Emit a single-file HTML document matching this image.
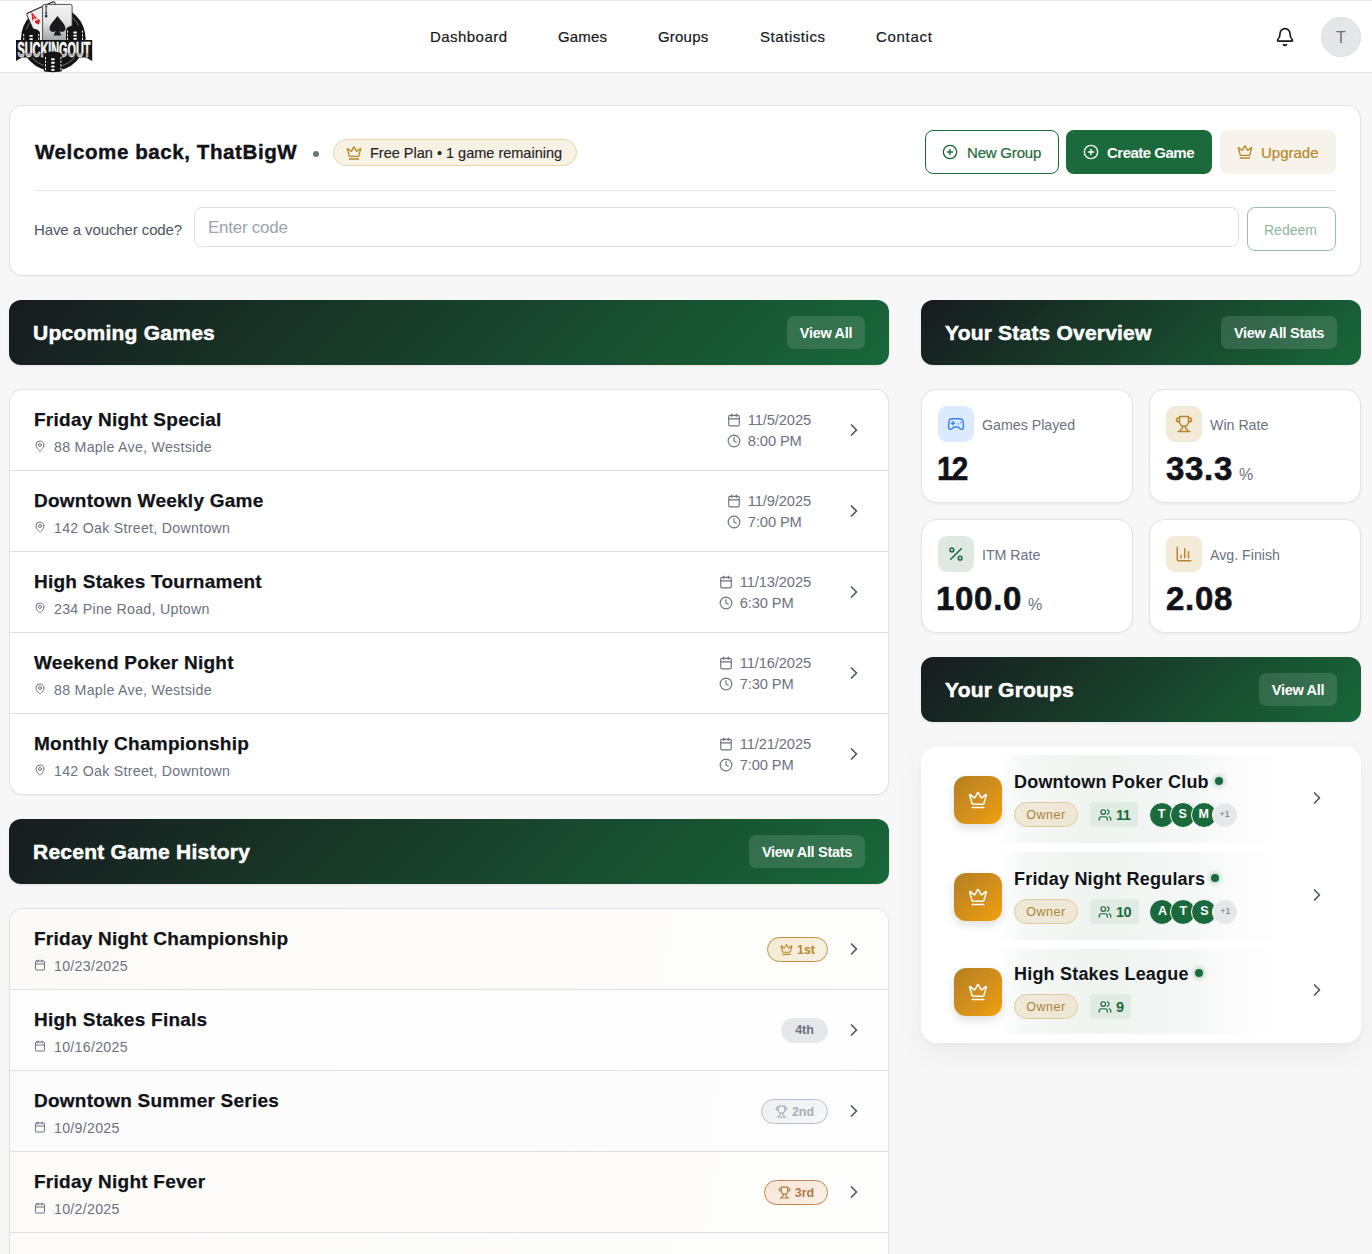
<!DOCTYPE html>
<html><head><meta charset="utf-8">
<style>
*{box-sizing:border-box;margin:0;padding:0}
html,body{width:1372px;height:1254px;overflow:hidden}
body{background:#f7f7f7;font-family:"Liberation Sans",sans-serif;color:#111318;position:relative}
.abs{position:absolute}
.hdr{position:absolute;left:0;top:0;width:1372px;height:73px;background:#fff;border-top:1px solid #e4e5e9;border-bottom:1px solid #e4e5e9}
.nav{position:absolute;top:27px;font-size:15px;color:#16181d;white-space:nowrap;line-height:20px;-webkit-text-stroke:.2px #16181d}
.card{position:absolute;background:#fff;border:1px solid #e0e1e6;border-radius:13px;box-shadow:0 1px 2px rgba(0,0,0,.04)}
.sechdr{position:absolute;height:65px;border-radius:12px;background:linear-gradient(135deg,#171b1f 0%,#183d29 45%,#18673a 100%);box-shadow:0 1px 3px rgba(0,0,0,.08)}
.sechdr h2{position:absolute;left:24px;top:21px;font-size:21px;font-weight:700;color:#fff;line-height:24px;white-space:nowrap;-webkit-text-stroke:.5px #fff}
.vbtn{position:absolute;top:16px;height:33px;border-radius:7px;background:rgba(255,255,255,.13);color:#fff;font-size:14.5px;font-weight:700;line-height:34.5px;text-align:center;white-space:nowrap;letter-spacing:-.3px}
.row{position:absolute;left:0;width:878px;height:80px}
.div{position:absolute;left:0;width:878px;height:1px;background:#dfe0e5}
.rt{position:absolute;left:24px;top:19px;font-size:19px;font-weight:700;color:#111318;white-space:nowrap;line-height:22px;letter-spacing:.25px;-webkit-text-stroke:.25px #111318}
.rs{position:absolute;left:24px;top:48px;font-size:14.2px;color:#6b7280;white-space:nowrap;line-height:18px;letter-spacing:.28px}
.rs svg{position:absolute;left:0;top:2px}
.rs span{position:absolute;left:20px;top:0}
.chev{position:absolute;left:834px;top:30px}
.dt{position:absolute;font-size:14.7px;color:#6b7280;white-space:nowrap;line-height:18px}
.stat{position:absolute;width:212px;height:114px;background:#fff;border:1px solid #e2e3e8;border-radius:15px;box-shadow:0 1px 3px rgba(0,0,0,.05)}
.sico{position:absolute;left:16px;top:16px;width:36px;height:36px;border-radius:9px}
.sico svg{position:absolute;left:9px;top:9px}
.slab{position:absolute;left:60px;top:26px;font-size:14.2px;color:#6b7280;line-height:18px;white-space:nowrap}
.sval{position:absolute;left:16px;top:59px;font-size:33px;font-weight:700;color:#111318;line-height:40px;white-space:nowrap;letter-spacing:.7px;-webkit-text-stroke:.6px #111318}
.sval small{font-size:16px;font-weight:400;color:#6b7280;letter-spacing:0;margin-left:6px;-webkit-text-stroke:0}
.dtb{position:absolute;right:77px;top:19.5px}
.dl{position:relative;padding-left:21px;font-size:14.7px;color:#6b7280;line-height:21px;white-space:nowrap;height:21px;letter-spacing:-.12px}
.dl svg{position:absolute;left:0;top:3px}
.bdg{position:absolute;top:28px;height:25px;border-radius:13px;font-size:12.5px;font-weight:700;line-height:24.5px;text-align:center;white-space:nowrap}
.bdg svg{position:relative;top:2px;margin-right:4px}
.grow{position:absolute;left:16px;width:408px}
.ghl{position:absolute;left:62px;top:0;width:282px;height:100%;background:linear-gradient(90deg,rgba(238,243,240,0) 0%,rgba(238,243,239,.55) 8%,rgba(236,242,238,.85) 35%,rgba(238,242,239,.6) 65%,rgba(255,255,255,0) 100%)}
.gico{position:absolute;left:17px;top:22px;width:48px;height:48px;border-radius:12px;background:linear-gradient(135deg,#b47f22 0%,#d18e1b 50%,#f0a00f 100%);box-shadow:0 4px 10px rgba(0,0,0,.13)}
.gico svg{position:absolute;left:14px;top:14px}
.gname{position:absolute;left:77px;top:17px;font-size:18px;font-weight:700;color:#111318;line-height:22px;white-space:nowrap;letter-spacing:.2px}
.gdot{display:inline-block;width:8px;height:8px;border-radius:50%;background:#1b6a3b;margin-left:6px;position:relative;top:-3px;box-shadow:0 0 4px 2px rgba(27,106,59,.25)}
.gbar{position:absolute;left:77px;top:48px;height:25px;display:flex;align-items:center}
.owner{height:25px;border-radius:13px;background:#f0e8d6;border:1px solid #ddcb9f;color:#a8843a;font-size:12.5px;line-height:25px;padding:0;letter-spacing:.5px;width:64px;text-align:center}
.mem{height:25px;border-radius:4px;background:#e0ebe4;margin-left:12px;padding:0 8px;display:flex;align-items:center;color:#1b6a3b;font-size:14.5px}
.mem b{margin-left:4px;letter-spacing:-.6px}
.avs{display:flex;margin-left:10.5px}
.av{width:26px;height:26px;border-radius:50%;background:#1b6a3b;border:1.5px solid #fff;color:#fff;font-size:12.5px;font-weight:700;line-height:23px;text-align:center;margin-right:-5px;flex:none}
.av.more{background:#e5e7eb;color:#6b7280;font-size:9px;font-weight:400}
.gchev{position:absolute;left:370px;top:34px}
</style></head><body>

<div class="hdr"></div>
<!-- logo -->
<svg class="abs" style="left:0;top:0" width="100" height="74" viewBox="0 0 100 74">
  <defs>
    <linearGradient id="cg" x1="0" y1="0" x2="0" y2="1"><stop offset="0" stop-color="#f2f2f2"/><stop offset=".45" stop-color="#e6e6e6"/><stop offset="1" stop-color="#9c9ea2"/></linearGradient>
    <linearGradient id="tg" x1="0" y1="0" x2="0" y2="1"><stop offset="0" stop-color="#fff"/><stop offset=".6" stop-color="#fff"/><stop offset=".62" stop-color="#9a9a9a"/><stop offset="1" stop-color="#e8e8e8"/></linearGradient>
  </defs>
  <circle cx="53.3" cy="38.6" r="32.3" fill="#141414"/>
  <circle cx="53.3" cy="38.6" r="28.5" fill="none" stroke="#9a9a9a" stroke-width=".7"/>
  <g transform="rotate(-24 26.2 13.7)"><rect x="26.2" y="13.7" width="30.5" height="36" rx="1.8" fill="#efefef" stroke="#1a1a1a" stroke-width=".9"/>
  <path d="M29.6 22.6 L31.6 16.2 L33.6 22.6 M30.4 20.6 L32.8 20.6" stroke="#e3191b" stroke-width="1.3" fill="none"/>
  <path d="M30.8 25 c0-1.6 2.2-2 2.6-.4 c.4-1.6 2.6-1.2 2.6.4 c0 1.8-2.6 3-2.6 3.6 c0-.6-2.6-1.8-2.6-3.6z" fill="#e3191b"/></g>
  <rect x="42.6" y="4.4" width="29.5" height="38" rx="1.8" fill="url(#cg)" stroke="#2a2a2a" stroke-width=".8"/>
  <path d="M44.8 6.2 h2.6 M46.1 6.2 v7 M44.8 13.2 h2.6" stroke="#222" stroke-width="1"/>
  <path d="M46.1 14 l-1.6 2 l1.6 2 l1.6 -2z" fill="#222"/>
  <path d="M57.5 16 C54 21 49.6 24 49.6 28.6 C49.6 31.6 52.6 33 55.6 31 L53.6 35.6 L61.4 35.6 L59.4 31 C62.4 33 65.4 31.6 65.4 28.6 C65.4 24 61 21 57.5 16Z" fill="#1a1a1c"/>
  <g fill="#141414"><ellipse cx="31" cy="33" rx="9" ry="4.5"/><rect x="22" y="33" width="18" height="8"/><ellipse cx="75" cy="30" rx="9" ry="4.5"/><rect x="66" y="30" width="18" height="11"/></g>
  <g fill="#fff"><rect x="29.4" y="35" width="3.4" height="1.8" rx=".5"/><rect x="29.4" y="38.2" width="3.4" height="1.8" rx=".5"/><rect x="73.4" y="31.6" width="3.4" height="1.8" rx=".5"/><rect x="73.4" y="34.8" width="3.4" height="1.8" rx=".5"/><rect x="73.4" y="38" width="3.4" height="1.8" rx=".5"/>
  <rect x="23.2" y="34" width="1" height="2.2"/><rect x="23.2" y="37.6" width="1" height="2.2"/><rect x="38.2" y="34" width="1" height="2.2"/><rect x="38.2" y="37.6" width="1" height="2.2"/>
  <rect x="67" y="30.6" width="1" height="2.2"/><rect x="67" y="34.2" width="1" height="2.2"/><rect x="67" y="37.8" width="1" height="2.2"/><rect x="82" y="30.6" width="1" height="2.2"/><rect x="82" y="34.2" width="1" height="2.2"/><rect x="82" y="37.8" width="1" height="2.2"/></g>
  <path d="M16 40 L92.2 40 L92.2 61 L86 57.5 L22 57.5 L16 61Z" fill="#161616"/>
  <text x="54" y="57.5" text-anchor="middle" font-family="Liberation Sans" font-weight="700" font-size="11" fill="url(#tg)" stroke="#f4f4f4" stroke-width=".35" textLength="73" lengthAdjust="spacingAndGlyphs" transform="translate(54 57.5) scale(1 1.95) translate(-54 -57.5)">SUCKINGOUT</text>
  <g fill="#141414"><ellipse cx="52.8" cy="55" rx="9" ry="3.5"/><rect x="43.8" y="55" width="18" height="16"/><ellipse cx="52.8" cy="71" rx="9" ry="1.2"/></g>
  <g fill="#fff"><rect x="51.2" y="58.2" width="3.4" height="2" rx=".5"/><rect x="51.2" y="61.8" width="3.4" height="2" rx=".5"/><rect x="51.2" y="65.4" width="3.4" height="2" rx=".5"/><rect x="51.2" y="69" width="3.4" height="1.8" rx=".5"/>
  <rect x="45" y="57" width="1" height="2.2"/><rect x="45" y="60.6" width="1" height="2.2"/><rect x="45" y="64.2" width="1" height="2.2"/><rect x="45" y="67.8" width="1" height="2.2"/><rect x="60.4" y="57" width="1" height="2.2"/><rect x="60.4" y="60.6" width="1" height="2.2"/><rect x="60.4" y="64.2" width="1" height="2.2"/><rect x="60.4" y="67.8" width="1" height="2.2"/></g>
</svg>

<div class="nav" style="left:430px;letter-spacing:.45px">Dashboard</div>
<div class="nav" style="left:558px;letter-spacing:.16px">Games</div>
<div class="nav" style="left:658px;letter-spacing:.2px">Groups</div>
<div class="nav" style="left:760px;letter-spacing:.55px">Statistics</div>
<div class="nav" style="left:876px;letter-spacing:.7px">Contact</div>

<!-- bell -->
<svg class="abs" style="left:1275px;top:27px" width="20" height="20" viewBox="0 0 24 24" fill="none" stroke="#16181d" stroke-width="2" stroke-linecap="round" stroke-linejoin="round"><path d="M10.268 21a2 2 0 0 0 3.464 0"/><path d="M3.262 15.326A1 1 0 0 0 4 17h16a1 1 0 0 0 .74-1.673C19.41 13.956 18 12.499 18 8A6 6 0 0 0 6 8c0 4.499-1.411 5.956-2.738 7.326"/></svg>
<div class="abs" style="left:1321px;top:17px;width:40px;height:40px;border-radius:50%;background:#e5e6ea;border:1px solid #dcdde2;color:#6b7280;font-size:16px;line-height:40px;text-align:center">T</div>

<!-- welcome card -->
<div class="card" style="left:9px;top:105px;width:1352px;height:171px">
  <div class="abs" style="left:25px;top:34px;font-size:20.6px;font-weight:700;letter-spacing:.55px;line-height:24px;white-space:nowrap;-webkit-text-stroke:.4px #111318">Welcome back, ThatBigW</div>
  <div class="abs" style="left:303px;top:44.5px;width:6px;height:6px;border-radius:50%;background:#6b7280"></div>
  <div class="abs" style="left:323px;top:33px;width:244px;height:27px;border-radius:14px;background:#f7f2e4;border:1px solid #e6d4a8"></div>
  <svg class="abs" style="left:336px;top:39px" width="16" height="16" viewBox="0 0 24 24" fill="none" stroke="#b8862b" stroke-width="2" stroke-linecap="round" stroke-linejoin="round"><path d="M11.562 3.266a.5.5 0 0 1 .876 0L15.39 8.87a1 1 0 0 0 1.516.294L21.183 5.5a.5.5 0 0 1 .798.519l-2.834 10.246a1 1 0 0 1-.956.734H5.81a1 1 0 0 1-.957-.734L2.02 6.02a.5.5 0 0 1 .798-.519l4.276 3.664a1 1 0 0 0 1.516-.294z"/><path d="M5 21h14"/></svg>
  <div class="abs" style="left:360px;top:39px;font-size:14.5px;line-height:17px;color:#1f2328;white-space:nowrap;-webkit-text-stroke:.15px #1f2328">Free Plan • 1 game remaining</div>

  <div class="abs" style="left:915px;top:24px;width:134px;height:44px;border:1px solid #1b6a3b;border-radius:8px"></div>
  <svg class="abs" style="left:932px;top:38px" width="16" height="16" viewBox="0 0 24 24" fill="none" stroke="#1b6a3b" stroke-width="2" stroke-linecap="round"><circle cx="12" cy="12" r="10"/><path d="M8 12h8"/><path d="M12 8v8"/></svg>
  <div class="abs" style="left:957px;top:38px;font-size:15px;line-height:18px;color:#1b6a3b;white-space:nowrap;letter-spacing:-.2px;-webkit-text-stroke:.2px #1b6a3b">New Group</div>

  <div class="abs" style="left:1056px;top:24px;width:146px;height:44px;background:#1b6a3b;border-radius:8px"></div>
  <svg class="abs" style="left:1073px;top:38px" width="16" height="16" viewBox="0 0 24 24" fill="none" stroke="#fff" stroke-width="2" stroke-linecap="round"><circle cx="12" cy="12" r="10"/><path d="M8 12h8"/><path d="M12 8v8"/></svg>
  <div class="abs" style="left:1097px;top:38px;font-size:15px;font-weight:700;line-height:18px;color:#fff;white-space:nowrap;letter-spacing:-.5px">Create Game</div>

  <div class="abs" style="left:1210px;top:24px;width:116px;height:44px;background:#f7f3ea;border-radius:8px"></div>
  <svg class="abs" style="left:1227px;top:38px" width="16" height="16" viewBox="0 0 24 24" fill="none" stroke="#b8862b" stroke-width="2" stroke-linecap="round" stroke-linejoin="round"><path d="M11.562 3.266a.5.5 0 0 1 .876 0L15.39 8.87a1 1 0 0 0 1.516.294L21.183 5.5a.5.5 0 0 1 .798.519l-2.834 10.246a1 1 0 0 1-.956.734H5.81a1 1 0 0 1-.957-.734L2.02 6.02a.5.5 0 0 1 .798-.519l4.276 3.664a1 1 0 0 0 1.516-.294z"/><path d="M5 21h14"/></svg>
  <div class="abs" style="left:1251px;top:38px;font-size:15px;line-height:18px;color:#b8862b;white-space:nowrap;-webkit-text-stroke:.2px #b8862b">Upgrade</div>

  <div class="abs" style="left:24px;top:84px;width:1302px;height:1px;background:#e4e5ea"></div>

  <div class="abs" style="left:24px;top:115px;font-size:15px;line-height:18px;color:#4b5563;white-space:nowrap;letter-spacing:-.1px">Have a voucher code?</div>
  <div class="abs" style="left:184px;top:101px;width:1045px;height:40px;border:1px solid #dfe0e4;border-radius:8px"></div>
  <div class="abs" style="left:198px;top:112px;font-size:17px;line-height:20px;color:#9ca3af;white-space:nowrap;letter-spacing:-.25px">Enter code</div>
  <div class="abs" style="left:1237px;top:101px;width:89px;height:44px;border:1px solid #98c2a6;border-radius:8px"></div>
  <div class="abs" style="left:1254px;top:115px;font-size:14px;line-height:18px;color:#8db99b;white-space:nowrap">Redeem</div>
</div>

<!-- Upcoming Games header -->
<div class="sechdr" style="left:9px;top:300px;width:880px">
  <h2 style="letter-spacing:.25px">Upcoming Games</h2>
  <div class="vbtn" style="left:778px;width:78px">View All</div>
</div>

<!-- upcoming list -->
<div class="card" id="up" style="left:9px;top:389px;width:880px;height:406px;overflow:hidden">
<div class="row" style="top:0px"><div class="rt">Friday Night Special</div><div class="rs"><svg width="12" height="12" viewBox="0 0 24 24" fill="none" stroke="#6b7280" stroke-width="2" stroke-linecap="round" stroke-linejoin="round"><path d="M20 10c0 4.993-5.539 10.193-7.399 11.799a1 1 0 0 1-1.202 0C9.539 20.193 4 14.993 4 10a8 8 0 0 1 16 0"/><circle cx="12" cy="10" r="3"/></svg><span>88 Maple Ave, Westside</span></div><div class="dtb"><div class="dl"><svg width="14" height="14" viewBox="0 0 24 24" fill="none" stroke="#6b7280" stroke-width="2" stroke-linecap="round" stroke-linejoin="round"><path d="M8 2v4"/><path d="M16 2v4"/><rect width="18" height="18" x="3" y="4" rx="2"/><path d="M3 10h18"/></svg><span>11/5/2025</span></div><div class="dl"><svg width="14" height="14" viewBox="0 0 24 24" fill="none" stroke="#6b7280" stroke-width="2" stroke-linecap="round" stroke-linejoin="round"><circle cx="12" cy="12" r="10"/><polyline points="12 6 12 12 16 14"/></svg><span>8:00 PM</span></div></div><div class="chev"><svg width="20" height="20" viewBox="0 0 24 24" fill="none" stroke="#4b5563" stroke-width="2" stroke-linecap="round" stroke-linejoin="round"><path d="m9 18 6-6-6-6"/></svg></div></div>
<div class="div" style="top:80px"></div>
<div class="row" style="top:81px"><div class="rt">Downtown Weekly Game</div><div class="rs"><svg width="12" height="12" viewBox="0 0 24 24" fill="none" stroke="#6b7280" stroke-width="2" stroke-linecap="round" stroke-linejoin="round"><path d="M20 10c0 4.993-5.539 10.193-7.399 11.799a1 1 0 0 1-1.202 0C9.539 20.193 4 14.993 4 10a8 8 0 0 1 16 0"/><circle cx="12" cy="10" r="3"/></svg><span>142 Oak Street, Downtown</span></div><div class="dtb"><div class="dl"><svg width="14" height="14" viewBox="0 0 24 24" fill="none" stroke="#6b7280" stroke-width="2" stroke-linecap="round" stroke-linejoin="round"><path d="M8 2v4"/><path d="M16 2v4"/><rect width="18" height="18" x="3" y="4" rx="2"/><path d="M3 10h18"/></svg><span>11/9/2025</span></div><div class="dl"><svg width="14" height="14" viewBox="0 0 24 24" fill="none" stroke="#6b7280" stroke-width="2" stroke-linecap="round" stroke-linejoin="round"><circle cx="12" cy="12" r="10"/><polyline points="12 6 12 12 16 14"/></svg><span>7:00 PM</span></div></div><div class="chev"><svg width="20" height="20" viewBox="0 0 24 24" fill="none" stroke="#4b5563" stroke-width="2" stroke-linecap="round" stroke-linejoin="round"><path d="m9 18 6-6-6-6"/></svg></div></div>
<div class="div" style="top:161px"></div>
<div class="row" style="top:162px"><div class="rt">High Stakes Tournament</div><div class="rs"><svg width="12" height="12" viewBox="0 0 24 24" fill="none" stroke="#6b7280" stroke-width="2" stroke-linecap="round" stroke-linejoin="round"><path d="M20 10c0 4.993-5.539 10.193-7.399 11.799a1 1 0 0 1-1.202 0C9.539 20.193 4 14.993 4 10a8 8 0 0 1 16 0"/><circle cx="12" cy="10" r="3"/></svg><span>234 Pine Road, Uptown</span></div><div class="dtb"><div class="dl"><svg width="14" height="14" viewBox="0 0 24 24" fill="none" stroke="#6b7280" stroke-width="2" stroke-linecap="round" stroke-linejoin="round"><path d="M8 2v4"/><path d="M16 2v4"/><rect width="18" height="18" x="3" y="4" rx="2"/><path d="M3 10h18"/></svg><span>11/13/2025</span></div><div class="dl"><svg width="14" height="14" viewBox="0 0 24 24" fill="none" stroke="#6b7280" stroke-width="2" stroke-linecap="round" stroke-linejoin="round"><circle cx="12" cy="12" r="10"/><polyline points="12 6 12 12 16 14"/></svg><span>6:30 PM</span></div></div><div class="chev"><svg width="20" height="20" viewBox="0 0 24 24" fill="none" stroke="#4b5563" stroke-width="2" stroke-linecap="round" stroke-linejoin="round"><path d="m9 18 6-6-6-6"/></svg></div></div>
<div class="div" style="top:242px"></div>
<div class="row" style="top:243px"><div class="rt">Weekend Poker Night</div><div class="rs"><svg width="12" height="12" viewBox="0 0 24 24" fill="none" stroke="#6b7280" stroke-width="2" stroke-linecap="round" stroke-linejoin="round"><path d="M20 10c0 4.993-5.539 10.193-7.399 11.799a1 1 0 0 1-1.202 0C9.539 20.193 4 14.993 4 10a8 8 0 0 1 16 0"/><circle cx="12" cy="10" r="3"/></svg><span>88 Maple Ave, Westside</span></div><div class="dtb"><div class="dl"><svg width="14" height="14" viewBox="0 0 24 24" fill="none" stroke="#6b7280" stroke-width="2" stroke-linecap="round" stroke-linejoin="round"><path d="M8 2v4"/><path d="M16 2v4"/><rect width="18" height="18" x="3" y="4" rx="2"/><path d="M3 10h18"/></svg><span>11/16/2025</span></div><div class="dl"><svg width="14" height="14" viewBox="0 0 24 24" fill="none" stroke="#6b7280" stroke-width="2" stroke-linecap="round" stroke-linejoin="round"><circle cx="12" cy="12" r="10"/><polyline points="12 6 12 12 16 14"/></svg><span>7:30 PM</span></div></div><div class="chev"><svg width="20" height="20" viewBox="0 0 24 24" fill="none" stroke="#4b5563" stroke-width="2" stroke-linecap="round" stroke-linejoin="round"><path d="m9 18 6-6-6-6"/></svg></div></div>
<div class="div" style="top:323px"></div>
<div class="row" style="top:324px"><div class="rt">Monthly Championship</div><div class="rs"><svg width="12" height="12" viewBox="0 0 24 24" fill="none" stroke="#6b7280" stroke-width="2" stroke-linecap="round" stroke-linejoin="round"><path d="M20 10c0 4.993-5.539 10.193-7.399 11.799a1 1 0 0 1-1.202 0C9.539 20.193 4 14.993 4 10a8 8 0 0 1 16 0"/><circle cx="12" cy="10" r="3"/></svg><span>142 Oak Street, Downtown</span></div><div class="dtb"><div class="dl"><svg width="14" height="14" viewBox="0 0 24 24" fill="none" stroke="#6b7280" stroke-width="2" stroke-linecap="round" stroke-linejoin="round"><path d="M8 2v4"/><path d="M16 2v4"/><rect width="18" height="18" x="3" y="4" rx="2"/><path d="M3 10h18"/></svg><span>11/21/2025</span></div><div class="dl"><svg width="14" height="14" viewBox="0 0 24 24" fill="none" stroke="#6b7280" stroke-width="2" stroke-linecap="round" stroke-linejoin="round"><circle cx="12" cy="12" r="10"/><polyline points="12 6 12 12 16 14"/></svg><span>7:00 PM</span></div></div><div class="chev"><svg width="20" height="20" viewBox="0 0 24 24" fill="none" stroke="#4b5563" stroke-width="2" stroke-linecap="round" stroke-linejoin="round"><path d="m9 18 6-6-6-6"/></svg></div></div>
</div>

<!-- Recent header -->
<div class="sechdr" style="left:9px;top:819px;width:880px">
  <h2 style="letter-spacing:.25px">Recent Game History</h2>
  <div class="vbtn" style="left:740px;width:116px">View All Stats</div>
</div>

<div class="card" id="hist" style="left:9px;top:908px;width:880px;height:400px;overflow:hidden">
<div class="row" style="top:0px;background:linear-gradient(100deg,#fcfaf6 0%,#fdfcf9 50%,#fdfdfc 100%)"><div class="rt">Friday Night Championship</div><div class="rs"><svg width="12" height="12" viewBox="0 0 24 24" fill="none" stroke="#6b7280" stroke-width="2" stroke-linecap="round" stroke-linejoin="round"><path d="M8 2v4"/><path d="M16 2v4"/><rect width="18" height="18" x="3" y="4" rx="2"/><path d="M3 10h18"/></svg><span>10/23/2025</span></div><div class="bdg" style="background:linear-gradient(135deg,#f3e9d2,#f8f1e4);border:1px solid #c39339;color:#b8862b;width:61px;left:757px"><svg width="13" height="13" viewBox="0 0 24 24" fill="none" stroke="#b8862b" stroke-width="2" stroke-linecap="round" stroke-linejoin="round"><path d="M11.562 3.266a.5.5 0 0 1 .876 0L15.39 8.87a1 1 0 0 0 1.516.294L21.183 5.5a.5.5 0 0 1 .798.519l-2.834 10.246a1 1 0 0 1-.956.734H5.81a1 1 0 0 1-.957-.734L2.02 6.02a.5.5 0 0 1 .798-.519l4.276 3.664a1 1 0 0 0 1.516-.294z"/><path d="M5 21h14"/></svg><span>1st</span></div><div class="chev"><svg width="20" height="20" viewBox="0 0 24 24" fill="none" stroke="#4b5563" stroke-width="2" stroke-linecap="round" stroke-linejoin="round"><path d="m9 18 6-6-6-6"/></svg></div></div>
<div class="div" style="top:80px"></div>
<div class="row" style="top:81px;background:linear-gradient(100deg,#fdfdfd,#fefefe)"><div class="rt">High Stakes Finals</div><div class="rs"><svg width="12" height="12" viewBox="0 0 24 24" fill="none" stroke="#6b7280" stroke-width="2" stroke-linecap="round" stroke-linejoin="round"><path d="M8 2v4"/><path d="M16 2v4"/><rect width="18" height="18" x="3" y="4" rx="2"/><path d="M3 10h18"/></svg><span>10/16/2025</span></div><div class="bdg" style="background:#e5e7eb;color:#6b7280;width:47px;left:771px"><span>4th</span></div><div class="chev"><svg width="20" height="20" viewBox="0 0 24 24" fill="none" stroke="#4b5563" stroke-width="2" stroke-linecap="round" stroke-linejoin="round"><path d="m9 18 6-6-6-6"/></svg></div></div>
<div class="div" style="top:161px"></div>
<div class="row" style="top:162px;background:linear-gradient(100deg,#fbfbfb 0%,#fcfcfc 60%,#fdfdfd 100%)"><div class="rt">Downtown Summer Series</div><div class="rs"><svg width="12" height="12" viewBox="0 0 24 24" fill="none" stroke="#6b7280" stroke-width="2" stroke-linecap="round" stroke-linejoin="round"><path d="M8 2v4"/><path d="M16 2v4"/><rect width="18" height="18" x="3" y="4" rx="2"/><path d="M3 10h18"/></svg><span>10/9/2025</span></div><div class="bdg" style="background:linear-gradient(135deg,#eef0f3,#f5f6f8);border:1px solid #b9bec8;color:#a9aeb8;width:67px;left:751px"><svg width="13" height="13" viewBox="0 0 24 24" fill="none" stroke="#a9aeb8" stroke-width="2" stroke-linecap="round" stroke-linejoin="round"><path d="M6 9H4.5a2.5 2.5 0 0 1 0-5H6"/><path d="M18 9h1.5a2.5 2.5 0 0 0 0-5H18"/><path d="M4 22h16"/><path d="M10 14.66V17c0 .55-.47.98-.97 1.21C7.85 18.75 7 20.24 7 22"/><path d="M14 14.66V17c0 .55.47.98.97 1.21C16.15 18.75 17 20.24 17 22"/><path d="M18 2H6v7a6 6 0 0 0 12 0V2Z"/></svg><span>2nd</span></div><div class="chev"><svg width="20" height="20" viewBox="0 0 24 24" fill="none" stroke="#4b5563" stroke-width="2" stroke-linecap="round" stroke-linejoin="round"><path d="m9 18 6-6-6-6"/></svg></div></div>
<div class="div" style="top:242px"></div>
<div class="row" style="top:243px;background:linear-gradient(100deg,#fcfbf8 0%,#fdfcfa 60%,#fdfdfc 100%)"><div class="rt">Friday Night Fever</div><div class="rs"><svg width="12" height="12" viewBox="0 0 24 24" fill="none" stroke="#6b7280" stroke-width="2" stroke-linecap="round" stroke-linejoin="round"><path d="M8 2v4"/><path d="M16 2v4"/><rect width="18" height="18" x="3" y="4" rx="2"/><path d="M3 10h18"/></svg><span>10/2/2025</span></div><div class="bdg" style="background:linear-gradient(135deg,#f6e6d7,#faf0e6);border:1px solid #c08550;color:#b07a48;width:64px;left:754px"><svg width="13" height="13" viewBox="0 0 24 24" fill="none" stroke="#b07a48" stroke-width="2" stroke-linecap="round" stroke-linejoin="round"><path d="M6 9H4.5a2.5 2.5 0 0 1 0-5H6"/><path d="M18 9h1.5a2.5 2.5 0 0 0 0-5H18"/><path d="M4 22h16"/><path d="M10 14.66V17c0 .55-.47.98-.97 1.21C7.85 18.75 7 20.24 7 22"/><path d="M14 14.66V17c0 .55.47.98.97 1.21C16.15 18.75 17 20.24 17 22"/><path d="M18 2H6v7a6 6 0 0 0 12 0V2Z"/></svg><span>3rd</span></div><div class="chev"><svg width="20" height="20" viewBox="0 0 24 24" fill="none" stroke="#4b5563" stroke-width="2" stroke-linecap="round" stroke-linejoin="round"><path d="m9 18 6-6-6-6"/></svg></div></div>
<div class="div" style="top:323px"></div>
<div class="row" style="top:324px;background:linear-gradient(100deg,#fcfbf8,#fdfdfc)"><div class="rt">Night Five</div><div class="rs"><svg width="12" height="12" viewBox="0 0 24 24" fill="none" stroke="#6b7280" stroke-width="2" stroke-linecap="round" stroke-linejoin="round"><path d="M8 2v4"/><path d="M16 2v4"/><rect width="18" height="18" x="3" y="4" rx="2"/><path d="M3 10h18"/></svg><span>9/25/2025</span></div><div class="bdg" style="background:#e5e7eb;color:#6b7280;width:47px;left:771px"><span>5th</span></div><div class="chev"><svg width="20" height="20" viewBox="0 0 24 24" fill="none" stroke="#4b5563" stroke-width="2" stroke-linecap="round" stroke-linejoin="round"><path d="m9 18 6-6-6-6"/></svg></div></div>
<div class="div" style="top:404px"></div>
</div>

<!-- Stats header -->
<div class="sechdr" style="left:921px;top:300px;width:440px">
  <h2 style="letter-spacing:.2px">Your Stats Overview</h2>
  <div class="vbtn" style="left:300px;width:116px">View All Stats</div>
</div>

<div class="stat" style="left:921px;top:389px">
  <div class="sico" style="background:#dbeafe"><svg width="18" height="18" viewBox="0 0 24 24" fill="none" stroke="#3b82f6" stroke-width="2" stroke-linecap="round" stroke-linejoin="round"><line x1="6" x2="10" y1="11" y2="11"/><line x1="8" x2="8" y1="9" y2="13"/><line x1="15" x2="15.01" y1="12" y2="12"/><line x1="18" x2="18.01" y1="10" y2="10"/><path d="M17.32 5H6.68a4 4 0 0 0-3.978 3.59c-.006.052-.01.101-.017.152C2.604 9.416 2 14.456 2 16a3 3 0 0 0 3 3c1 0 1.5-.5 2-1l1.414-1.414A2 2 0 0 1 9.828 16h4.344a2 2 0 0 1 1.414.586L17 18c.5.5 1 1 2 1a3 3 0 0 0 3-3c0-1.545-.604-6.584-.685-7.258-.007-.05-.011-.1-.017-.151A4 4 0 0 0 17.32 5z"/></svg></div>
  <div class="slab">Games Played</div>
  <div class="sval" style="letter-spacing:-2px;left:15px;transform:scaleX(.9);transform-origin:0 0">12</div>
</div>
<div class="stat" style="left:1149px;top:389px">
  <div class="sico" style="background:#f3ead8"><svg width="18" height="18" viewBox="0 0 24 24" fill="none" stroke="#b8862b" stroke-width="2" stroke-linecap="round" stroke-linejoin="round"><path d="M6 9H4.5a2.5 2.5 0 0 1 0-5H6"/><path d="M18 9h1.5a2.5 2.5 0 0 0 0-5H18"/><path d="M4 22h16"/><path d="M10 14.66V17c0 .55-.47.98-.97 1.21C7.85 18.75 7 20.24 7 22"/><path d="M14 14.66V17c0 .55.47.98.97 1.21C16.15 18.75 17 20.24 17 22"/><path d="M18 2H6v7a6 6 0 0 0 12 0V2Z"/></svg></div>
  <div class="slab">Win Rate</div>
  <div class="sval">33.3<small>%</small></div>
</div>
<div class="stat" style="left:921px;top:519px">
  <div class="sico" style="background:#dfe9e2"><svg width="18" height="18" viewBox="0 0 24 24" fill="none" stroke="#1b6a3b" stroke-width="2" stroke-linecap="round" stroke-linejoin="round"><line x1="19" x2="5" y1="5" y2="19"/><circle cx="6.5" cy="6.5" r="2.5"/><circle cx="17.5" cy="17.5" r="2.5"/></svg></div>
  <div class="slab">ITM Rate</div>
  <div class="sval" style="left:14px">100.0<small>%</small></div>
</div>
<div class="stat" style="left:1149px;top:519px">
  <div class="sico" style="background:#f3ead8"><svg width="18" height="18" viewBox="0 0 24 24" fill="none" stroke="#b8862b" stroke-width="2" stroke-linecap="round" stroke-linejoin="round"><path d="M3 3v16a2 2 0 0 0 2 2h16"/><path d="M18 17V9"/><path d="M13 17V5"/><path d="M8 17v-3"/></svg></div>
  <div class="slab">Avg. Finish</div>
  <div class="sval">2.08</div>
</div>

<!-- Groups header -->
<div class="sechdr" style="left:921px;top:657px;width:440px">
  <h2 style="letter-spacing:.2px">Your Groups</h2>
  <div class="vbtn" style="left:338px;width:78px">View All</div>
</div>

<div class="abs" id="groups" style="left:921px;top:746px;width:440px;height:297px;background:#fff;border-radius:16px;box-shadow:0 10px 30px rgba(0,0,0,.05),0 2px 6px rgba(0,0,0,.03)">
<div class="grow" style="top:9px;height:88px"><div class="ghl"></div><div class="gico" style="top:21px"><svg width="20" height="20" viewBox="0 0 24 24" fill="none" stroke="#fff" stroke-width="1.8" stroke-linecap="round" stroke-linejoin="round"><path d="M11.562 3.266a.5.5 0 0 1 .876 0L15.39 8.87a1 1 0 0 0 1.516.294L21.183 5.5a.5.5 0 0 1 .798.519l-2.834 10.246a1 1 0 0 1-.956.734H5.81a1 1 0 0 1-.957-.734L2.02 6.02a.5.5 0 0 1 .798-.519l4.276 3.664a1 1 0 0 0 1.516-.294z"/><path d="M5 21h14"/></svg></div><div class="gname" style="top:16px">Downtown Poker Club<i class="gdot"></i></div><div class="gbar" style="top:47px"><div class="owner">Owner</div><div class="mem"><svg width="14" height="14" viewBox="0 0 24 24" fill="none" stroke="#1b6a3b" stroke-width="2" stroke-linecap="round" stroke-linejoin="round"><path d="M16 21v-2a4 4 0 0 0-4-4H6a4 4 0 0 0-4 4v2"/><circle cx="9" cy="7" r="4"/><path d="M22 21v-2a4 4 0 0 0-3-3.87"/><path d="M16 3.13a4 4 0 0 1 0 7.75"/></svg><b>11</b></div><div class="avs"><div class="av">T</div><div class="av">S</div><div class="av">M</div><div class="av more">+1</div></div></div><div class="gchev" style="top:33px"><svg width="20" height="20" viewBox="0 0 24 24" fill="none" stroke="#4b5563" stroke-width="2" stroke-linecap="round" stroke-linejoin="round"><path d="m9 18 6-6-6-6"/></svg></div></div>
<div class="grow" style="top:106px;height:88px"><div class="ghl"></div><div class="gico" style="top:21px"><svg width="20" height="20" viewBox="0 0 24 24" fill="none" stroke="#fff" stroke-width="1.8" stroke-linecap="round" stroke-linejoin="round"><path d="M11.562 3.266a.5.5 0 0 1 .876 0L15.39 8.87a1 1 0 0 0 1.516.294L21.183 5.5a.5.5 0 0 1 .798.519l-2.834 10.246a1 1 0 0 1-.956.734H5.81a1 1 0 0 1-.957-.734L2.02 6.02a.5.5 0 0 1 .798-.519l4.276 3.664a1 1 0 0 0 1.516-.294z"/><path d="M5 21h14"/></svg></div><div class="gname" style="top:16px">Friday Night Regulars<i class="gdot"></i></div><div class="gbar" style="top:47px"><div class="owner">Owner</div><div class="mem"><svg width="14" height="14" viewBox="0 0 24 24" fill="none" stroke="#1b6a3b" stroke-width="2" stroke-linecap="round" stroke-linejoin="round"><path d="M16 21v-2a4 4 0 0 0-4-4H6a4 4 0 0 0-4 4v2"/><circle cx="9" cy="7" r="4"/><path d="M22 21v-2a4 4 0 0 0-3-3.87"/><path d="M16 3.13a4 4 0 0 1 0 7.75"/></svg><b>10</b></div><div class="avs"><div class="av">A</div><div class="av">T</div><div class="av">S</div><div class="av more">+1</div></div></div><div class="gchev" style="top:33px"><svg width="20" height="20" viewBox="0 0 24 24" fill="none" stroke="#4b5563" stroke-width="2" stroke-linecap="round" stroke-linejoin="round"><path d="m9 18 6-6-6-6"/></svg></div></div>
<div class="grow" style="top:203px;height:85px"><div class="ghl"></div><div class="gico" style="top:19px"><svg width="20" height="20" viewBox="0 0 24 24" fill="none" stroke="#fff" stroke-width="1.8" stroke-linecap="round" stroke-linejoin="round"><path d="M11.562 3.266a.5.5 0 0 1 .876 0L15.39 8.87a1 1 0 0 0 1.516.294L21.183 5.5a.5.5 0 0 1 .798.519l-2.834 10.246a1 1 0 0 1-.956.734H5.81a1 1 0 0 1-.957-.734L2.02 6.02a.5.5 0 0 1 .798-.519l4.276 3.664a1 1 0 0 0 1.516-.294z"/><path d="M5 21h14"/></svg></div><div class="gname" style="top:14px">High Stakes League<i class="gdot"></i></div><div class="gbar" style="top:45px"><div class="owner">Owner</div><div class="mem"><svg width="14" height="14" viewBox="0 0 24 24" fill="none" stroke="#1b6a3b" stroke-width="2" stroke-linecap="round" stroke-linejoin="round"><path d="M16 21v-2a4 4 0 0 0-4-4H6a4 4 0 0 0-4 4v2"/><circle cx="9" cy="7" r="4"/><path d="M22 21v-2a4 4 0 0 0-3-3.87"/><path d="M16 3.13a4 4 0 0 1 0 7.75"/></svg><b>9</b></div></div><div class="gchev" style="top:31px"><svg width="20" height="20" viewBox="0 0 24 24" fill="none" stroke="#4b5563" stroke-width="2" stroke-linecap="round" stroke-linejoin="round"><path d="m9 18 6-6-6-6"/></svg></div></div>
</div>

</body></html>
